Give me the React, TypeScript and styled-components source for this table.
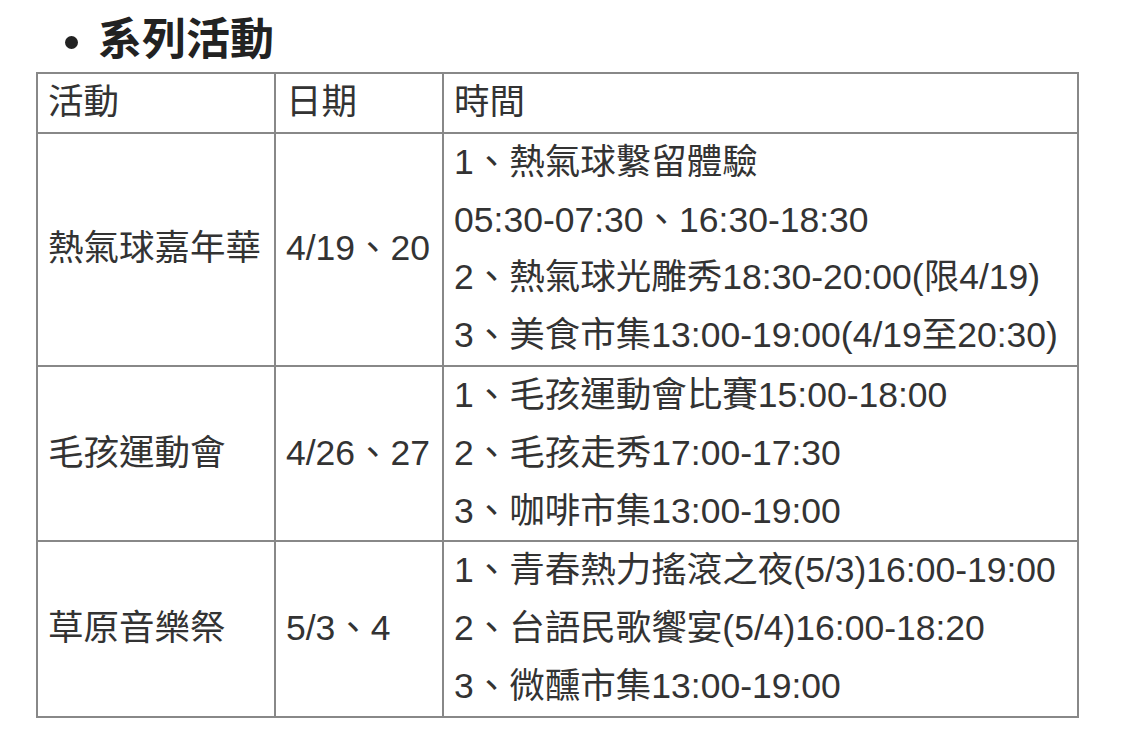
import { createGlobalStyle, styled } from "styled-components";

const GlobalStyle = createGlobalStyle`
  html, body {
    margin: 0;
    padding: 0;
    background: #ffffff;
  }
  body {
    font-family: "Liberation Sans", Arial, "Noto Sans CJK TC", sans-serif;
    color: #333333;
  }
`;

const Page = styled.div`
  padding: 10px 0 0 36px;
`;

const TitleList = styled.ul`
  margin: 0;
  padding: 0 0 0 62px;
  list-style: disc;
`;

const Title = styled.li`
  font-size: 44px;
  font-weight: bold;
  line-height: 60px;
  color: #222222;
`;

const Table = styled.table`
  border-collapse: collapse;
  margin-top: 2px;
  font-size: 35.5px;
  line-height: 57.8px;
`;

const Cell = styled.td<{ $width: number }>`
  border: 2px solid #888888;
  padding: 0 12px 0 10px;
  width: ${(p) => p.$width}px;
  white-space: nowrap;
  vertical-align: middle;
  color: #333333;
`;

const Line = styled.div``;

type Activity = {
  name: string;
  date: string;
  times: string[];
};

const activities: Activity[] = [
  {
    name: "熱氣球嘉年華",
    date: "4/19、20",
    times: [
      "1、熱氣球繫留體驗",
      "05:30-07:30、16:30-18:30",
      "2、熱氣球光雕秀18:30-20:00(限4/19)",
      "3、美食市集13:00-19:00(4/19至20:30)",
    ],
  },
  {
    name: "毛孩運動會",
    date: "4/26、27",
    times: ["1、毛孩運動會比賽15:00-18:00", "2、毛孩走秀17:00-17:30", "3、咖啡市集13:00-19:00"],
  },
  {
    name: "草原音樂祭",
    date: "5/3、4",
    times: [
      "1、青春熱力搖滾之夜(5/3)16:00-19:00",
      "2、台語民歌饗宴(5/4)16:00-18:20",
      "3、微醺市集13:00-19:00",
    ],
  },
];

const widths = [214, 144, 611];

const App = () => {
  return (
    <>
      <GlobalStyle />
      <Page>
        <TitleList>
          <Title>系列活動</Title>
        </TitleList>
        <Table>
          <tbody>
            <tr>
              <Cell $width={widths[0]}>活動</Cell>
              <Cell $width={widths[1]}>日期</Cell>
              <Cell $width={widths[2]}>時間</Cell>
            </tr>
            {activities.map((a) => (
              <tr key={a.name}>
                <Cell $width={widths[0]}>{a.name}</Cell>
                <Cell $width={widths[1]}>{a.date}</Cell>
                <Cell $width={widths[2]}>
                  {a.times.map((t) => (
                    <Line key={t}>{t}</Line>
                  ))}
                </Cell>
              </tr>
            ))}
          </tbody>
        </Table>
      </Page>
    </>
  );
};

export default App;
